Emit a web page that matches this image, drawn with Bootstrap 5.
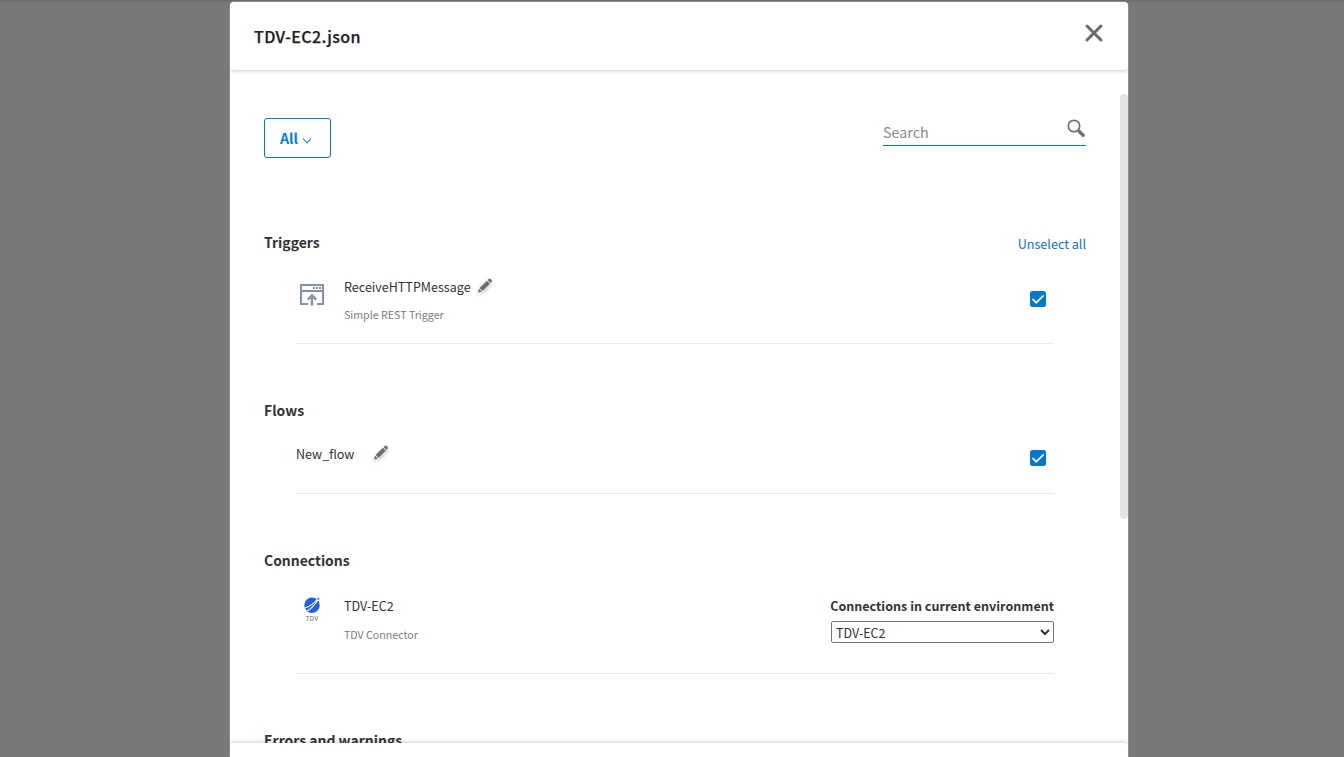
<!DOCTYPE html>
<html lang="en">
<head>
<meta charset="utf-8">
<meta name="viewport" content="width=device-width, initial-scale=1">
<title>TDV-EC2.json</title>
<link href="https://cdn.jsdelivr.net/npm/bootstrap@5.3.0/dist/css/bootstrap.min.css" rel="stylesheet">
<style>
  body { background: #797979; font-family: "Noto Sans CJK SC", "Source Sans Pro", sans-serif; color: #333; font-size: 13px; line-height: 20px; }
  .backdrop-strip { background: #797979; box-shadow: inset 0 2px 2px -1px #696969; }
  .import-dialog { width: 898.5px; margin: 2px auto 0 229.5px; height: 755px; border-radius: 4px 4px 0 0; box-shadow: 0 0 0 .5px #b5b5b5, 0 0 2px rgba(0,0,0,.4); overflow: hidden; }
  .dialog-head { height: 68px; padding: 0 24px 0 24.5px; border-radius: 4px; box-shadow: 0 1px 4px rgba(0,0,0,.2); z-index: 1; flex: none; }
  .dialog-title { font-size: 16px; font-weight: 500; color: #212121; letter-spacing: .4px; line-height: 24px; margin: -1px 0 0; -webkit-text-stroke: .25px #212121; }
  .close-btn { margin: -6px 0 0; }
  .dialog-body { height: 672.5px; padding: 48px 42px 0 34.5px; overflow: hidden; flex: none; }
  .dialog-foot { height: 20px; border-radius: 4px; box-shadow: 0 -1px 4px rgba(0,0,0,.2); z-index: 1; flex: none; }
  .scroll-thumb { top: 92px; right: 0; width: 8px; height: 425px; background: #e4e4e4; border-radius: 4px; }
  .filter-btn { width: 67px; height: 40px; border: 1px solid #0079cc; border-radius: 3px; color: #0081da; font-size: 14.2px; font-weight: 700; padding: 1px 0 0 15px; }
  .search-box { width: 203px; height: 28px; border-bottom: 1px solid #0b72e8; }
  .search-box input { font-size: 14.3px; line-height: 24px; background: none; outline: 0; width: 170px; }
  .search-box input::placeholder { color: #8a8a8a; opacity: 1; }
  .section-title { font-size: 13.95px; font-weight: 600; line-height: 22px; margin: 0 0 2px; color: #333; }
  .pick-link { color: #0d6fd0; font-size: 12.6px; position: relative; top: 1px; }
  .item-row { margin: 0 32px; border-bottom: 1px solid #ebebeb; }
  .item-name { font-size: 12.55px; line-height: 20px; }
  .item-kind { font-size: 10.65px; line-height: 16px; color: #7b7b7b; }
  .pencil { filter: drop-shadow(0 2px 2px rgba(0,0,0,.3)); margin-top: .5px; }
  .tick { width: 16px; height: 16px; background: #0079cc; border-radius: 2.5px; }
  .env-label { font-weight: 700; font-size: 12.55px; line-height: 20px; }
  .env-select { width: 223px; height: 22px; border: 1px solid #767676; border-radius: 2px; font-size: 12.5px; line-height: 18px; color: #333; padding: 0 0 2px; background: #fff; }
</style>
</head>
<body class="overflow-hidden vh-100">
<svg class="d-none">
  <symbol id="pencil" viewBox="0 0 16 16"><path fill="#6b6b6b" d="M.5 15.500l1-4 3 3zM2.300 10.700l7.700-7.700 3 3-7.700 7.700zM10.800 2.200l1.200-1.200q1-.9 2 0l1 1q.9 1 0 2l-1.200 1.200z"/></symbol>
  <symbol id="tick" viewBox="0 0 16 16"><path d="M2.500 8l3.700 3.700L13.600 4.500" fill="none" stroke="#fff" stroke-width="1.700"/></symbol>
</svg>
<div class="backdrop-strip vh-100 overflow-hidden">
<main class="import-dialog bg-white d-flex flex-column position-relative">
  <header class="dialog-head bg-white d-flex align-items-center justify-content-between position-relative">
    <h1 class="dialog-title">TDV-EC2.json</h1>
    <button class="close-btn btn p-0 border-0 lh-1" aria-label="Close"><svg width="20" height="20" viewBox="0 0 20 20"><path d="M3 3l14 14M17 3L3 17" stroke="#6b6b6b" stroke-width="3" stroke-linecap="round"/></svg></button>
  </header>
  <div class="dialog-body">
    <div class="d-flex justify-content-between">
      <button class="filter-btn btn d-flex align-items-center gap-1">All <svg class="mt-1" width="10" height="8" viewBox="0 0 10 8"><path d="M1 1.500l4 4.500 4-4.500" fill="none" stroke="#0079cc" stroke-width="1.100"/></svg></button>
      <div class="search-box d-flex align-items-center justify-content-between">
        <input class="border-0 p-0" type="text" placeholder="Search" aria-label="Search">
        <svg style="margin-bottom:7px" width="20" height="20" viewBox="0 0 20 20"><circle cx="8" cy="8" r="5.700" fill="none" stroke="#707070" stroke-width="1.700"/><path d="M12 12l1.500 1.500" stroke="#707070" stroke-width="2"/><path d="M13.500 13.800l3.700 3.500" stroke="#707070" stroke-width="3.400" stroke-linecap="round"/></svg>
      </div>
    </div>

    <section style="margin-top:73px">
      <div class="d-flex justify-content-between align-items-center"><h2 class="section-title">Triggers</h2><a class="pick-link text-decoration-none" href="#">Unselect all</a></div>
      <div class="item-row d-flex" style="height:89px;padding-top:22px">
        <svg class="flex-shrink-0" style="margin:6px 16px 0 4px" width="28" height="26" viewBox="0 0 28 26"><path d="M8 21H1V2h22v19h-6M1 8h22" fill="none" stroke="#8392a9" stroke-width="2"/><path d="M13 5h2m1 0h2m1 0h2" stroke="#8392a9" stroke-width="2"/><path d="M12 22.500v-9M7.800 16.700L12 12.500l4.200 4.200" fill="none" stroke="#8392a9" stroke-width="2.400"/></svg>
        <div class="flex-grow-1"><div class="item-name d-flex"><span>ReceiveHTTPMessage</span><svg class="pencil" style="margin-left:6px" width="16" height="15"><use href="#pencil"/></svg></div><div class="item-kind" style="margin-top:10px">Simple REST Trigger</div></div>
        <span class="tick d-flex me-2" style="margin-top:14px"><svg width="16" height="16"><use href="#tick"/></svg></span>
      </div>
    </section>

    <section style="margin-top:55px">
      <h2 class="section-title">Flows</h2>
      <div class="item-row d-flex" style="height:71px;padding-top:21px">
        <div class="item-name d-flex flex-grow-1"><span>New_flow</span><svg class="pencil" style="margin-left:18.500px" width="16" height="15"><use href="#pencil"/></svg></div>
        <span class="tick d-flex me-2" style="margin-top:6px"><svg width="16" height="16"><use href="#tick"/></svg></span>
      </div>
    </section>

    <section style="margin-top:55px">
      <h2 class="section-title">Connections</h2>
      <div class="item-row d-flex" style="height:101px;padding-top:23px">
        <svg style="margin:1px 20px 0 8px" width="20" height="26" viewBox="0 0 20 26"><circle cx="8" cy="8.300" r="7.700" fill="#235ee6"/><path d="M1 11Q8 9 14 1.500M3 14Q9 11 14.500 2" fill="none" stroke="#fff" stroke-width="1.200"/><circle cx="14.300" cy="1.700" r="1.300" fill="#6f96ee"/><text x="1.700" y="24.300" font-size="6.300" font-family="Roboto, sans-serif" letter-spacing=".4" fill="#666">TDV</text></svg>
        <div class="flex-grow-1"><div class="item-name">TDV-EC2</div><div class="item-kind" style="margin-top:11px">TDV Connector</div></div>
        <div><div class="env-label">Connections in current environment</div><select class="env-select d-block ms-auto" style="margin-top:5px" aria-label="Connections in current environment"><option>TDV-EC2</option></select></div>
      </div>
    </section>

    <section style="margin-top:55px"><h2 class="section-title">Errors and warnings</h2></section>
  </div>
  <footer class="dialog-foot bg-white position-relative"></footer>
  <div class="scroll-thumb position-absolute"></div>
</main>
</div>
<script src="https://cdn.jsdelivr.net/npm/bootstrap@5.3.0/dist/js/bootstrap.bundle.min.js"></script>
</body>
</html>
